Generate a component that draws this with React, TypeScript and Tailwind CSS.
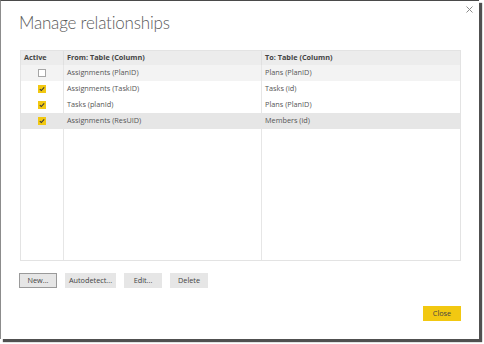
import React from 'react';

type Rel = { active: boolean; from: string; to: string; tone: 'hover' | 'plain' | 'selected' };

const relationships: Rel[] = [
  { active: false, from: 'Assignments (PlanID)', to: 'Plans (PlanID)', tone: 'hover' },
  { active: true, from: 'Assignments (TaskID)', to: 'Tasks (id)', tone: 'plain' },
  { active: true, from: 'Tasks (planId)', to: 'Plans (PlanID)', tone: 'plain' },
  { active: true, from: 'Assignments (ResUID)', to: 'Members (id)', tone: 'selected' },
];

function CheckBox({ checked }: { checked: boolean }) {
  if (!checked) {
    return <div className="w-[8px] h-[8px] border border-[#a6a6a6] bg-white" />;
  }
  return (
    <div className="w-[8px] h-[8px] bg-[#f2c811] flex items-center justify-center">
      <svg width="6" height="6" viewBox="0 0 6 6">
        <path d="M0.8 3.1 L2.3 4.5 L5.2 1.3" fill="none" stroke="#3a3a3a" strokeWidth="1.1" />
      </svg>
    </div>
  );
}

function Button({ label, width, focused }: { label: string; width: string; focused?: boolean }) {
  return (
    <button
      className={`h-[15px] ${width} bg-[#e6e6e6] text-[7.3px] text-[#444] ${
        focused ? 'border border-[#9a9a9a]' : ''
      }`}
    >
      {label}
    </button>
  );
}

export default function App() {
  return (
    <div className="w-[484px] h-[344px] bg-white font-['Open_Sans',sans-serif]">
      <div className="w-[479px] h-[339px] bg-white border-l border-t border-l-[#8c8c8c] border-t-[#4a4a4a] shadow-[3px_3px_1px_#505050] flex flex-col">
        <div className="flex justify-between">
          <h1 className="pl-[18px] pt-[9px] text-[17px] font-light text-[#5a5a5a] font-['Lato',sans-serif] tracking-[-0.2px]">
            Manage relationships
          </h1>
          <svg className="mt-[5px] mr-[6px]" width="7" height="7" viewBox="0 0 7 7">
            <path d="M0.5 0.5 L6.5 6.5 M6.5 0.5 L0.5 6.5" stroke="#8a8a8a" strokeWidth="1" />
          </svg>
        </div>

        <div className="ml-[19px] mt-[14px] w-[441px] h-[211px] border border-[#e3e3e3] flex flex-col text-[7.3px] text-[#555]">
          <div className="h-[14px] bg-[#ececec] flex items-center font-bold text-[#444]">
            <div className="w-[43px] pl-[3px] h-full flex items-center border-r border-[#e0e0e0]">Active</div>
            <div className="w-[198px] pl-[3px] h-full flex items-center border-r border-[#e0e0e0]">From: Table (Column)</div>
            <div className="flex-1 pl-[3px]">To: Table (Column)</div>
          </div>
          {relationships.map((r) => (
            <div
              key={r.from}
              className={`h-[16px] flex items-center ${
                r.tone === 'hover' ? 'bg-[#f3f3f3]' : r.tone === 'selected' ? 'bg-[#e6e6e6]' : 'bg-white'
              }`}
            >
              <div className="w-[43px] h-full flex items-center justify-center border-r border-[#e6e6e6]">
                <CheckBox checked={r.active} />
              </div>
              <div className="w-[198px] pl-[3px] h-full flex items-center border-r border-[#e6e6e6]">{r.from}</div>
              <div className="flex-1 pl-[3px]">{r.to}</div>
            </div>
          ))}
          <div className="flex-1 flex">
            <div className="w-[43px] border-r border-[#e6e6e6]" />
            <div className="w-[198px] border-r border-[#e6e6e6]" />
            <div className="flex-1" />
          </div>
        </div>

        <div className="ml-[18px] mt-[12px] flex gap-[8px]">
          <Button label="New..." width="w-[38px]" focused />
          <Button label="Autodetect..." width="w-[51px]" />
          <Button label="Edit..." width="w-[38px]" />
          <Button label="Delete" width="w-[38px]" />
        </div>

        <div className="flex justify-end mr-[18px] mt-[18px]">
          <button className="h-[15px] w-[38px] bg-[#f2c811] text-[7.3px] text-[#444]">Close</button>
        </div>
      </div>
    </div>
  );
}
